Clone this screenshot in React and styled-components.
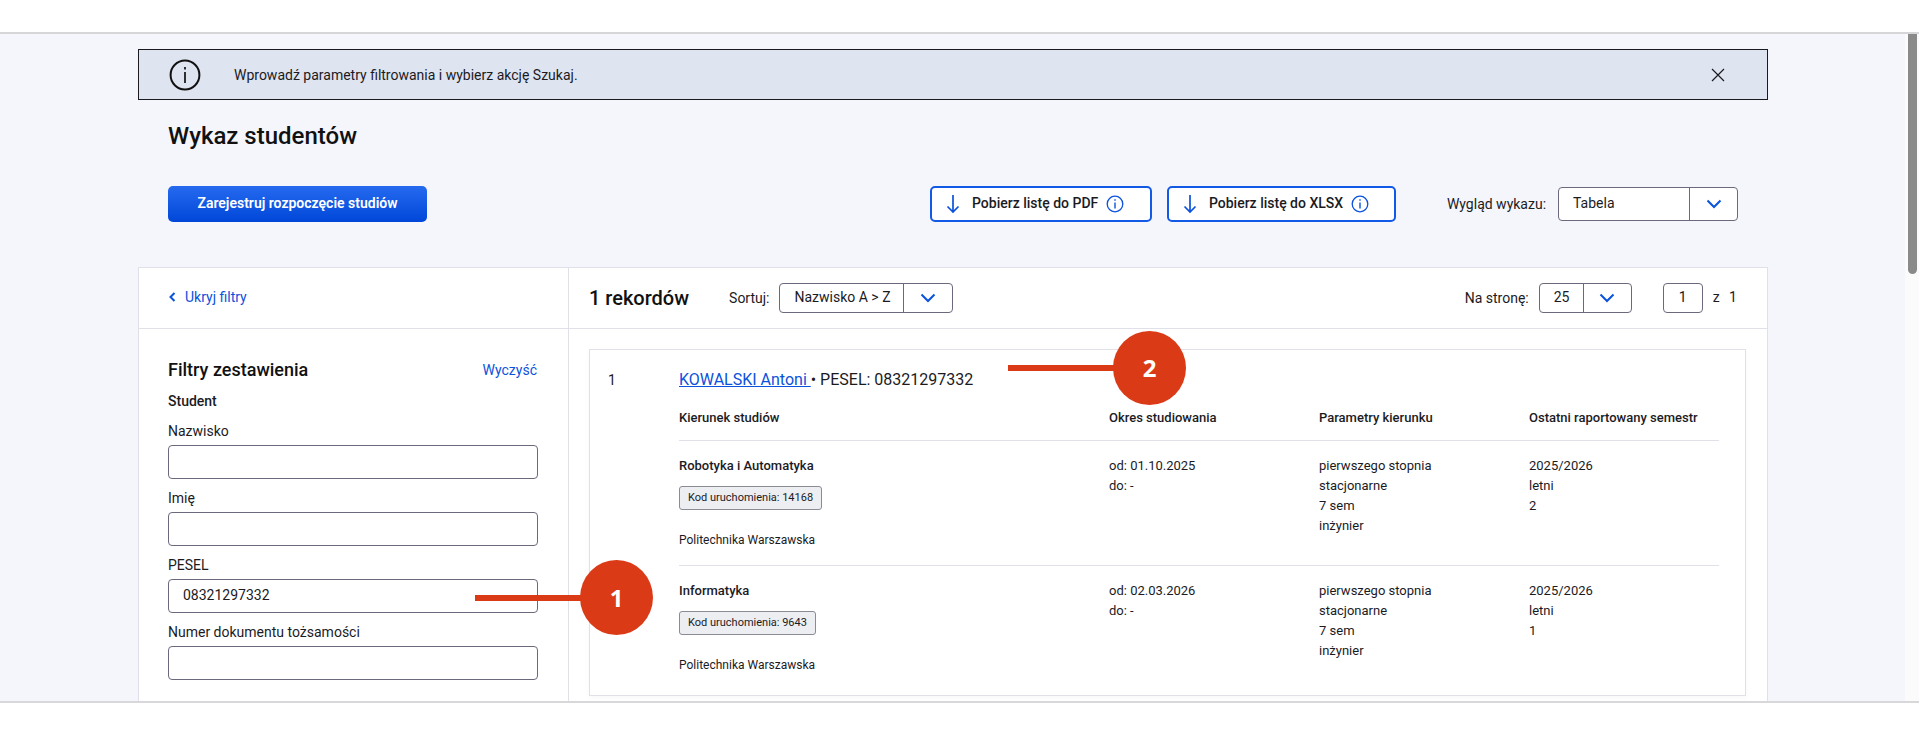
import React from "react";
import styled, { createGlobalStyle } from "styled-components";

const Global = createGlobalStyle`
  html, body { margin: 0; padding: 0; background: #fff; overflow: hidden; }
  body { font-family: Roboto, "Liberation Sans", sans-serif; color: #1b1b1f; font-size: 14px; }
  * { box-sizing: border-box; }
`;

const BLUE = "#0b52dc";
const LINE = "#dfe0e8";
const FIELD = "#6a6a7c";

const Page = styled.div`
  position: relative;
  width: 1919px;
  height: 743px;
  padding-top: 32px;
  overflow: hidden;
  background: #fff;
`;
const Frame = styled.div`
  display: flex;
  height: 671px;
  overflow: hidden;
  background: #f5f6fb;
  border-top: 2px solid #d6d6d8;
  border-bottom: 2px solid #d8d8da;
`;
const Content = styled.main`
  flex: 1;
  min-width: 0;
  padding: 15px 137px 0 138px;
`;
const Scrollbar = styled.div`
  flex: 0 0 14px;
  background: #fbfbfb;
  padding: 0 2px 0 3px;
`;
const Thumb = styled.div`
  height: 240px;
  background: #8a8a8a;
  border-radius: 0 0 5px 5px;
`;
const Alert = styled.div`
  display: flex;
  align-items: center;
  height: 51px;
  padding: 0 42px 0 30px;
  background: #dfe4f1;
  border: 1px solid #1b1b1f;
`;
const AlertText = styled.span`
  flex: 1;
  margin-left: 33px;
  font-size: 14px;
  line-height: 20px;
`;
const Title = styled.h1`
  margin: 20px 0 34px 30px;
  font-size: 24px;
  line-height: 32px;
  font-weight: 500;
  color: #111;
`;
const ActionRow = styled.div`
  display: flex;
  align-items: center;
  height: 36px;
  padding: 0 30px;
`;
const PrimaryButton = styled.button`
  width: 259px;
  height: 36px;
  padding: 0 0 2px;
  border: 0;
  border-radius: 5px;
  background: linear-gradient(180deg, #256aee 0%, #0047d9 100%);
  color: #fff;
  font: 600 14px/20px Roboto, sans-serif;
`;
const DownloadButton = styled.button`
  display: flex;
  align-items: center;
  width: ${(p) => p.$width}px;
  height: 36px;
  margin-left: ${(p) => p.$offset}px;
  padding: 0 0 0 14px;
  background: #fff;
  border: 2px solid #1259e6;
  border-radius: 5px;
  color: #1b1b1f;
  font: 500 14px/20px Roboto, sans-serif;
`;
const DownloadLabel = styled.span`
  margin: 0 8px 2px 12px;
`;
const FieldLabel = styled.span`
  margin-left: ${(p) => p.$offset || 0}px;
  margin-right: ${(p) => p.$gap || 10}px;
  padding-bottom: 1px;
  font-size: 14px;
  line-height: 20px;
  white-space: nowrap;
`;
const Select = styled.div`
  display: flex;
  align-items: stretch;
  width: ${(p) => p.$width}px;
  height: ${(p) => p.$height}px;
  background: #fff;
  border: 1px solid ${FIELD};
  border-radius: 4px;
`;
const SelectValue = styled.span`
  flex: 1;
  display: flex;
  align-items: center;
  padding: 0 0 2px ${(p) => p.$pad}px;
  font-size: 14px;
`;
const SelectArrow = styled.span`
  flex: 0 0 ${(p) => p.$width}px;
  display: flex;
  align-items: center;
  justify-content: center;
  border-left: 1px solid ${FIELD};
`;
const Panel = styled.section`
  display: grid;
  grid-template-columns: 430px 1fr;
  margin-top: 45px;
  height: 600px;
  background: #fff;
  border: 1px solid ${LINE};
`;
const Side = styled.aside`
  border-right: 1px solid ${LINE};
`;
const SideTop = styled.div`
  display: flex;
  align-items: center;
  gap: 9px;
  height: 61px;
  padding: 0 0 2px 29px;
  border-bottom: 1px solid ${LINE};
`;
const BlueLink = styled.a`
  color: ${BLUE};
  font-size: 14px;
  line-height: 20px;
`;
const Filters = styled.form`
  padding: 29px 31px 0 29px;
`;
const FiltersHead = styled.div`
  display: flex;
  align-items: center;
  justify-content: space-between;
  height: 24px;
`;
const FiltersTitle = styled.h2`
  margin: 0;
  font-size: 18px;
  line-height: 24px;
  font-weight: 500;
  color: #111;
`;
const GroupLabel = styled.div`
  margin: 9px 0 10px;
  font-size: 14px;
  line-height: 20px;
  font-weight: 500;
`;
const Label = styled.label`
  display: block;
  margin-bottom: 4px;
  font-size: 14px;
  line-height: 20px;
`;
const Input = styled.div`
  display: flex;
  align-items: center;
  width: 370px;
  height: 34px;
  margin-bottom: 9px;
  padding: 0 0 2px 14px;
  background: #fff;
  border: 1px solid ${FIELD};
  border-radius: 4px;
  font-size: 14px;
`;
const Results = styled.div`
  min-width: 0;
`;
const ResultsTop = styled.div`
  display: flex;
  align-items: center;
  height: 61px;
  padding: 0 30px 0 20px;
  border-bottom: 1px solid ${LINE};
`;
const Records = styled.h2`
  margin: 0 40px 0 0;
  font-size: 20px;
  line-height: 24px;
  font-weight: 500;
  color: #111;
`;
const PagerGroup = styled.div`
  display: flex;
  align-items: center;
  margin-left: auto;
`;
const PageInput = styled.div`
  display: flex;
  align-items: center;
  justify-content: center;
  width: 40px;
  height: 30px;
  margin: 0 10px 0 31px;
  padding-bottom: 2px;
  background: #fff;
  border: 1px solid ${FIELD};
  border-radius: 4px;
  font-size: 14px;
`;
const PageOf = styled.span`
  padding-bottom: 2px;
  font-size: 14px;
  word-spacing: 6px;
`;
const RecordCard = styled.article`
  display: flex;
  margin: 20px 21px 0 20px;
  padding: 17px 26px 4px 18px;
  height: 347px;
  background: #fff;
  border: 1px solid ${LINE};
  box-shadow: 0 2px 6px rgba(0, 0, 0, 0.03);
`;
const RecordIndex = styled.div`
  flex: 0 0 71px;
  font-size: 14px;
  line-height: 26px;
`;
const RecordBody = styled.div`
  flex: 1;
  min-width: 0;
`;
const RecordName = styled.div`
  margin-bottom: 15px;
  font-size: 16px;
  line-height: 26px;
`;
const NameLink = styled.a`
  color: ${BLUE};
  text-decoration: underline;
`;
const Grid = styled.div`
  display: grid;
  grid-template-columns: 430px 210px 210px 1fr;
  padding: ${(p) => (p.$head ? "0 0 12px" : "15px 0")};
  border-bottom: ${(p) => (p.$last ? "0" : `1px solid ${LINE}`)};
  font-size: 13px;
  line-height: 20px;
  font-weight: ${(p) => (p.$head ? 500 : 400)};
`;
const StrongLine = styled.div`
  font-weight: 500;
`;
const CodeBadge = styled.div`
  width: fit-content;
  height: 24px;
  margin: 10px 0 20px;
  padding: 0 8px;
  background: #eceef2;
  border: 1px solid #8b8b95;
  border-radius: 3px;
  font-size: 11px;
  line-height: 21px;
`;
const School = styled.div`
  font-size: 12px;
`;
const Marker = styled.div`
  position: absolute;
  left: ${(p) => p.$left}px;
  top: ${(p) => p.$top}px;
  width: ${(p) => p.$w}px;
  height: 6px;
  background: #db3a16;
`;
const Bubble = styled.div`
  position: absolute;
  left: ${(p) => p.$left}px;
  top: ${(p) => p.$top}px;
  display: flex;
  align-items: center;
  justify-content: center;
  width: 73px;
  height: ${(p) => p.$h}px;
  border-radius: 50%;
  background: #db3a16;
  color: #fff;
  font: 700 24px/1 "Open Sans", sans-serif;
`;

const Chevron = () => (
  <svg width="16" height="10" viewBox="0 0 16 10" fill="none" stroke={BLUE} strokeWidth="2">
    <path d="M1.500 1.500 8 8l6.500-6.500" />
  </svg>
);
const ArrowDown = () => (
  <svg width="14" height="20" viewBox="0 0 14 20" fill="none" stroke={BLUE} strokeWidth="1.7">
    <path d="M7 1v17M1.500 12.500 7 18l5.500-5.500" />
  </svg>
);
const InfoSmall = () => (
  <svg width="18" height="18" viewBox="0 0 18 18" fill="none" stroke={BLUE} strokeWidth="1.3">
    <circle cx="9" cy="9" r="7.800" />
    <path d="M9 7.500v6" strokeWidth="1.4" />
    <path d="M9 4.300v1.500" strokeWidth="1.4" />
  </svg>
);
const InfoLarge = () => (
  <svg width="32" height="32" viewBox="0 0 32 32" fill="none" stroke="#111" strokeWidth="2">
    <circle cx="16" cy="16" r="14.400" />
    <path d="M16 13v11M16 8v2.400" strokeWidth="1.700" />
  </svg>
);
const CloseIcon = () => (
  <svg width="14" height="14" viewBox="0 0 14 14" fill="none" stroke="#1b1b1f" strokeWidth="1.200">
    <path d="M1 1l12 12M13 1 1 13" />
  </svg>
);
const BackIcon = () => (
  <svg width="8" height="12" viewBox="0 0 8 12" fill="none" stroke={BLUE} strokeWidth="2">
    <path d="M6.500 2 2.500 6l4 4" />
  </svg>
);

const FIELDS = [
  { label: "Nazwisko" },
  { label: "Imię" },
  { label: "PESEL", value: "08321297332" },
  { label: "Numer dokumentu tożsamości" },
];
const ROWS = [
  { name: "Robotyka i Automatyka", code: "14168", from: "01.10.2025", sem: "2" },
  { name: "Informatyka", code: "9643", from: "02.03.2026", sem: "1", last: true },
];

export default function App() {
  return (
    <Page>
      <Global />
      <Frame>
        <Content>
          <Alert>
            <InfoLarge />
            <AlertText>Wprowadź parametry filtrowania i wybierz akcję Szukaj.</AlertText>
            <CloseIcon />
          </Alert>
          <Title>Wykaz studentów</Title>
          <ActionRow>
            <PrimaryButton>Zarejestruj rozpoczęcie studiów</PrimaryButton>
            <DownloadButton $width={222} $offset={503}>
              <ArrowDown />
              <DownloadLabel>Pobierz listę do PDF</DownloadLabel>
              <InfoSmall />
            </DownloadButton>
            <DownloadButton $width={229} $offset={15}>
              <ArrowDown />
              <DownloadLabel>Pobierz listę do XLSX</DownloadLabel>
              <InfoSmall />
            </DownloadButton>
            <FieldLabel $offset={51} $gap={12}>Wygląd wykazu:</FieldLabel>
            <Select $width={180} $height={34}>
              <SelectValue $pad={14}>Tabela</SelectValue>
              <SelectArrow $width={48}><Chevron /></SelectArrow>
            </Select>
          </ActionRow>
          <Panel>
            <Side>
              <SideTop>
                <BackIcon />
                <BlueLink>Ukryj filtry</BlueLink>
              </SideTop>
              <Filters>
                <FiltersHead>
                  <FiltersTitle>Filtry zestawienia</FiltersTitle>
                  <BlueLink>Wyczyść</BlueLink>
                </FiltersHead>
                <GroupLabel>Student</GroupLabel>
                {FIELDS.map((f) => (
                  <div key={f.label}>
                    <Label>{f.label}</Label>
                    <Input>{f.value}</Input>
                  </div>
                ))}
              </Filters>
            </Side>
            <Results>
              <ResultsTop>
                <Records>1 rekordów</Records>
                <FieldLabel $gap={10}>Sortuj:</FieldLabel>
                <Select $width={174} $height={30}>
                  <SelectValue $pad={14}>Nazwisko A &gt; Z</SelectValue>
                  <SelectArrow $width={49}><Chevron /></SelectArrow>
                </Select>
                <PagerGroup>
                  <FieldLabel $gap={10}>Na stronę:</FieldLabel>
                  <Select $width={93} $height={30}>
                    <SelectValue $pad={14}>25</SelectValue>
                    <SelectArrow $width={48}><Chevron /></SelectArrow>
                  </Select>
                  <PageInput>1</PageInput>
                  <PageOf>z 1</PageOf>
                </PagerGroup>
              </ResultsTop>
              <RecordCard>
                <RecordIndex>1</RecordIndex>
                <RecordBody>
                  <RecordName>
                    <NameLink>KOWALSKI Antoni </NameLink> • PESEL: 08321297332
                  </RecordName>
                  <Grid $head>
                    <div>Kierunek studiów</div>
                    <div>Okres studiowania</div>
                    <div>Parametry kierunku</div>
                    <div>Ostatni raportowany semestr</div>
                  </Grid>
                  {ROWS.map((r) => (
                    <Grid key={r.code} $last={r.last}>
                      <div>
                        <StrongLine>{r.name}</StrongLine>
                        <CodeBadge>Kod uruchomienia: {r.code}</CodeBadge>
                        <School>Politechnika Warszawska</School>
                      </div>
                      <div>
                        <div>od: {r.from}</div>
                        <div>do: -</div>
                      </div>
                      <div>
                        <div>pierwszego stopnia</div>
                        <div>stacjonarne</div>
                        <div>7 sem</div>
                        <div>inżynier</div>
                      </div>
                      <div>
                        <div>2025/2026</div>
                        <div>letni</div>
                        <div>{r.sem}</div>
                      </div>
                    </Grid>
                  ))}
                </RecordBody>
              </RecordCard>
            </Results>
          </Panel>
        </Content>
        <Scrollbar><Thumb /></Scrollbar>
      </Frame>
      <Marker $left={475} $top={595} $w={110} />
      <Bubble $left={580} $top={560} $h={75}>1</Bubble>
      <Marker $left={1008} $top={365} $w={110} />
      <Bubble $left={1113} $top={331} $h={74}>2</Bubble>
    </Page>
  );
}
